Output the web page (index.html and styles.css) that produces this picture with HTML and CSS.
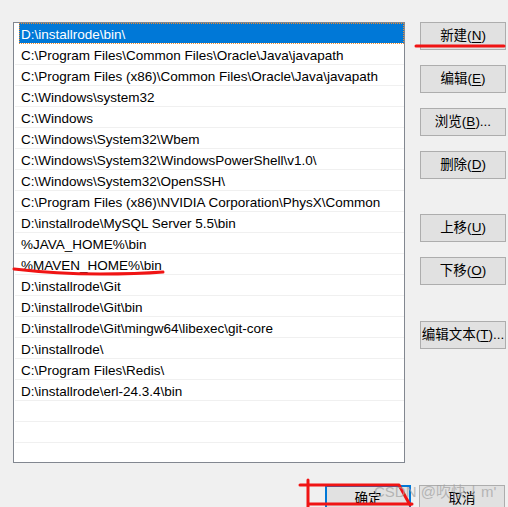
FILE: index.html
```html
<!DOCTYPE html>
<html lang="zh-CN">
<head>
<meta charset="utf-8">
<title>编辑环境变量</title>
<link rel="stylesheet" href="styles.css">
</head>
<body>
<div class="dialog">
  <div class="list">
    <div class="row selected">D:\installrode\bin\</div>
    <div class="row">C:\Program Files\Common Files\Oracle\Java\javapath</div>
    <div class="row">C:\Program Files (x86)\Common Files\Oracle\Java\javapath</div>
    <div class="row">C:\Windows\system32</div>
    <div class="row">C:\Windows</div>
    <div class="row">C:\Windows\System32\Wbem</div>
    <div class="row">C:\Windows\System32\WindowsPowerShell\v1.0\</div>
    <div class="row">C:\Windows\System32\OpenSSH\</div>
    <div class="row">C:\Program Files (x86)\NVIDIA Corporation\PhysX\Common</div>
    <div class="row">D:\installrode\MySQL Server 5.5\bin</div>
    <div class="row">%JAVA_HOME%\bin</div>
    <div class="row">%MAVEN_HOME%\bin</div>
    <div class="row">D:\installrode\Git</div>
    <div class="row">D:\installrode\Git\bin</div>
    <div class="row">D:\installrode\Git\mingw64\libexec\git-core</div>
    <div class="row">D:\installrode\</div>
    <div class="row">C:\Program Files\Redis\</div>
    <div class="row">D:\installrode\erl-24.3.4\bin</div>
    <div class="row"></div>
    <div class="row"></div>
    <div class="row"></div>
  </div>
  <div class="side">
    <button class="btn">新建(<u>N</u>)</button>
    <button class="btn">编辑(<u>E</u>)</button>
    <button class="btn">浏览(<u>B</u>)...</button>
    <button class="btn">删除(<u>D</u>)</button>
    <button class="btn group">上移(<u>U</u>)</button>
    <button class="btn">下移(<u>O</u>)</button>
    <button class="btn group2">编辑文本(<u>T</u>)...</button>
  </div>
  <div class="footer">
    <button class="btn default">确定</button>
    <button class="btn">取消</button>
  </div>
</div>
<svg class="marks" width="508" height="507" viewBox="0 0 508 507">
  <path d="M416 46 L504 46" />
  <path d="M14 269 C 40 272, 70 274, 100 274 S 150 273 163 272" />
  <path d="M308 480 L308 507 M300 485 L399 485 L410 505 M308 504 L412 504" />
</svg>
<div class="watermark">CSDN @吹快丨m'</div>
</body>
</html>
```
FILE: styles.css
```css
html, body {
  margin: 0;
  padding: 0;
  background: #f0f0f0;
  overflow: hidden;
}
body {
  width: 508px;
  height: 507px;
  position: relative;
  font-family: "Liberation Sans", "Noto Sans CJK SC", sans-serif;
  font-size: 13.5px;
  color: #000;
}
.dialog {
  display: grid;
  grid-template-columns: 392px 86px;
  column-gap: 15px;
  row-gap: 22px;
  padding: 22px 0 0 13px;
}
.list {
  box-sizing: border-box;
  height: 441px;
  background: #fff;
  border: 1px solid #828790;
  padding-left: 1px;
  overflow: hidden;
}
.row {
  box-sizing: border-box;
  height: 21px;
  padding-top: 2px;
  line-height: 20px;
  border-bottom: 1px solid #f0f0f0;
  padding-left: 6px;
  white-space: nowrap;
  overflow: hidden;
}
.row.selected {
  margin-left: 4px;
  padding-left: 2px;
  background: #0078d7;
  color: #fff;
  border-bottom-color: #fff;
  outline: 1px dotted #f08a2a;
  outline-offset: -1px;
}
.side {
  display: flex;
  flex-direction: column;
  gap: 15px;
}
.btn {
  box-sizing: border-box;
  width: 86px;
  height: 28px;
  padding: 0;
  background: #e1e1e1;
  border: 1px solid #adadad;
  font: inherit;
  font-family: "Liberation Sans", "Noto Sans CJK SC", sans-serif;
  color: #000;
  line-height: 24px;
  white-space: nowrap;
}
.btn u {
  text-decoration-thickness: 1px;
  text-underline-offset: 2px;
}
.side .group {
  margin-top: 20px;
}
.side .group2 {
  margin-top: 21px;
}
.footer {
  grid-column: 1 / span 2;
  display: flex;
  justify-content: flex-end;
  gap: 8px;
  padding-right: 1px;
}
.btn.default {
  border: 2px solid #0078d7;
}
.marks {
  position: absolute;
  left: 0;
  top: 0;
  pointer-events: none;
}
.marks path {
  fill: none;
  stroke: #f01414;
  stroke-width: 3;
  stroke-linecap: round;
  stroke-linejoin: round;
}
.watermark {
  position: absolute;
  left: 374px;
  top: 480px;
  font-size: 15px;
  color: rgba(160, 160, 160, 0.7);
  white-space: nowrap;
}
```
